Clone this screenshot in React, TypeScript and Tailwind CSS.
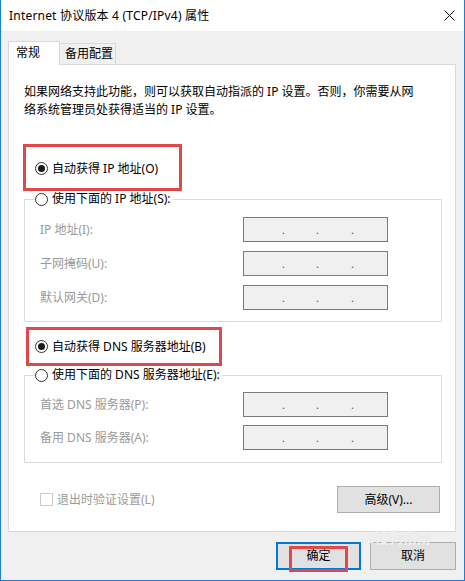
const font = "font-['Noto_Sans','Noto_Sans_CJK_SC',sans-serif]";

function Radio({ checked }: { checked?: boolean }) {
  return (
    <span className="flex h-[13px] w-[13px] shrink-0 items-center justify-center rounded-full border border-[#333333] bg-white">
      {checked && <span className="h-[7px] w-[7px] rounded-full bg-[#1a1a1a]" />}
    </span>
  );
}

function IpBox() {
  return (
    <div className="flex h-[25px] w-[145px] items-center border border-[#7a7a7a] bg-[#f0f0f0] pl-[38px] text-[11px] leading-none text-[#555555]">
      <span className="w-[34px]">.</span>
      <span className="w-[35px]">.</span>
      <span>.</span>
    </div>
  );
}

function Row({ label }: { label: string }) {
  return (
    <div className="grid grid-cols-[218px_145px] items-center">
      <span className="pl-[15px] text-[#9a9a9a]">{label}</span>
      <IpBox />
    </div>
  );
}

const ipRows = ["IP 地址(I):", "子网掩码(U):", "默认网关(D):"];
const dnsRows = ["首选 DNS 服务器(P):", "备用 DNS 服务器(A):"];

export default function App() {
  return (
    <div className={`${font} relative flex h-[581px] w-[465px] flex-col border-x border-b border-[#1b7fd5] bg-[#f0f0f0] text-[12px] text-black`}>
      <div className="flex h-[31px] shrink-0 items-center justify-between bg-white pl-[8px] pr-[9px]">
        <span className="tracking-[0.2px]">Internet 协议版本 4 (TCP/IPv4) 属性</span>
        <svg width="11" height="11" viewBox="0 0 11 11" className="text-[#111]">
          <path d="M0.5 0.5 L10.5 10.5 M10.5 0.5 L0.5 10.5" stroke="currentColor" strokeWidth="1" />
        </svg>
      </div>

      <div className="flex flex-col pl-[7px] pr-[8px]">
        <div className="mt-[10px] flex items-end">
          <div className="relative z-10 -mb-px flex h-[24px] w-[52px] items-center border-x border-t border-[#d9d9d9] bg-white pl-[7px] pb-[1px]">
            常规
          </div>
          <div className="flex h-[21px] w-[56px] items-center border-r border-t border-[#d9d9d9] pl-[5px]">
            备用配置
          </div>
        </div>

        <div className="flex h-[468px] flex-col border border-[#d9d9d9] bg-white px-[15px]">
          <p className="mt-[18px] leading-[18px]">
            如果网络支持此功能，则可以获取自动指派的 IP 设置。否则，你需要从网
            <br />
            络系统管理员处获得适当的 IP 设置。
          </p>

          <div className="-ml-px mt-[25px] flex h-[47px] w-[159px] items-center gap-[4px] border-[3px] border-[#e2474a] pl-[9px] pt-[2px]">
            <Radio checked />
            <span>自动获得 IP 地址(O)</span>
          </div>

          <fieldset className="w-[418px] border border-[#dcdcdc] pb-[11px]">
            <legend className="ml-[10px] flex items-center gap-[4px] bg-white pr-[2px] leading-[16px]">
              <Radio />
              <span>使用下面的 IP 地址(S):</span>
            </legend>
            <div className="flex flex-col gap-[9px] pt-[10px]">
              {ipRows.map((r) => (
                <Row key={r} label={r} />
              ))}
            </div>
          </fieldset>

          <div className="ml-[2px] mt-[5px] flex h-[39px] w-[196px] items-center gap-[4px] border-[3px] border-[#e2474a] pl-[6px]">
            <Radio checked />
            <span>自动获得 DNS 服务器地址(B)</span>
          </div>

          <fieldset className="mt-px w-[418px] border border-[#dcdcdc] pb-[12px]">
            <legend className="ml-[10px] flex items-center gap-[4px] bg-white pr-[2px] leading-[16px]">
              <Radio />
              <span>使用下面的 DNS 服务器地址(E):</span>
            </legend>
            <div className="flex flex-col gap-[8px] pt-[9px]">
              {dnsRows.map((r) => (
                <Row key={r} label={r} />
              ))}
            </div>
          </fieldset>

          <div className="mt-[23px] flex w-[418px] items-center justify-between">
            <div className="flex items-center gap-[4px] pl-[16px] text-[#9a9a9a]">
              <span className="h-[13px] w-[13px] border border-[#cccccc] bg-white" />
              <span>退出时验证设置(L)</span>
            </div>
            <button className="mr-[2px] h-[27px] w-[103px] border border-[#adadad] bg-[#e1e1e1]">高级(V)...</button>
          </div>
        </div>

        <div className="mt-[10px] flex justify-end gap-[9px]">
          <button className="relative h-[28px] w-[85px] border-2 border-[#0078d7] bg-[#e1e1e1]">
            确定
            <span className="absolute left-[11px] top-[2px] h-[26px] w-[59px] border-[3px] border-[#e2474a]" />
          </button>
          <button className="h-[28px] w-[86px] border border-[#adadad] bg-[#e1e1e1]">取消</button>
        </div>
      </div>

      <span className="pointer-events-none absolute left-[366px] top-[527px] text-[14px] font-bold text-white/70 [text-shadow:0_0_1px_#cfcfcf]">
        S搜狗指南
      </span>
    </div>
  );
}
